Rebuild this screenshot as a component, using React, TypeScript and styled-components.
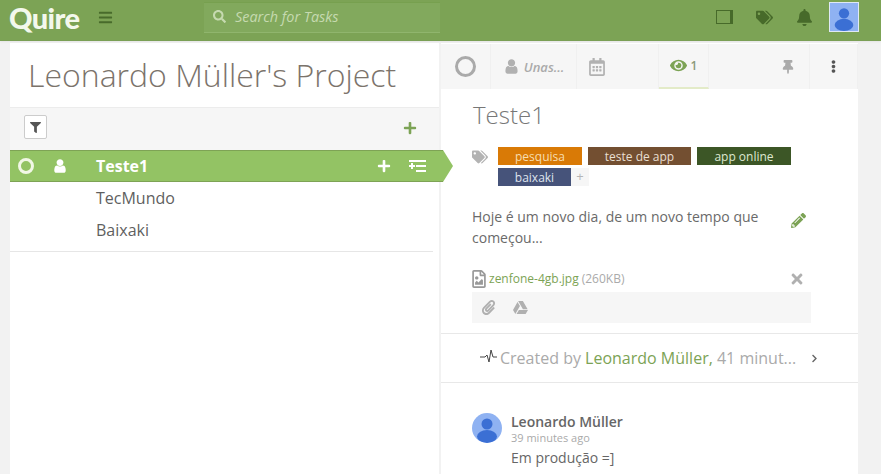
import styled, { createGlobalStyle } from "styled-components";
import {
  FaBars,
  FaBell,
  FaChevronRight,
  FaEllipsisV,
  FaEye,
  FaFilter,
  FaGoogleDrive,
  FaPaperclip,
  FaPencilAlt,
  FaPlus,
  FaRegCalendarAlt,
  FaRegFileImage,
  FaSearch,
  FaTags,
  FaThumbtack,
  FaTimes,
} from "react-icons/fa";

const GlobalStyle = createGlobalStyle`
  html, body {
    margin: 0;
    height: 100%;
    overflow: hidden;
    background: #f2f2f2;
    font-family: "Open Sans", "Liberation Sans", sans-serif;
    color: #555;
  }
  * { box-sizing: border-box; }
`;

const Page = styled.div`
  width: 881px;
  height: 474px;
  overflow: hidden;
`;

const TopBar = styled.header`
  height: 41px;
  background: #7ca355;
  display: flex;
  align-items: flex-start;
  border-bottom: 1px solid #7a9f55;
  box-shadow: 0 1px 2px rgba(0, 0, 0, 0.06);
`;

const Logo = styled.div`
  width: 98px;
  padding-left: 9px;
  font-family: Lato, "Open Sans", sans-serif;
  font-weight: 900;
  font-size: 29px;
  line-height: 35px;
  letter-spacing: -0.6px;
  color: #f3f8ec;
`;

const MenuButton = styled.div`
  width: 106px;
  height: 35px;
  display: flex;
  align-items: center;
  color: #486b2b;
  font-size: 15px;
`;

const SearchBox = styled.div`
  width: 236px;
  height: 31px;
  margin-top: 2px;
  padding: 0 0 3px 9px;
  display: flex;
  align-items: center;
  gap: 9px;
  background: #82a95d;
  border-top: 1px solid #77a04f;
  border-bottom: 1px solid #90b56d;
  color: #c6dab0;
  font-size: 14.4px;
  font-style: italic;
`;

const SearchGlyph = styled(FaSearch)`
  font-size: 13px;
`;

const TopIcons = styled.div`
  flex: 1;
  height: 40px;
  display: flex;
  align-items: flex-start;
  justify-content: flex-end;
  padding: 2px 22px 0 0;
  color: #476a2a;
`;

const TopIcon = styled.div`
  width: 40px;
  height: 30px;
  display: flex;
  align-items: center;
  justify-content: center;
  font-size: 17px;
`;

const PanelGlyph = styled.div`
  width: 17px;
  height: 14px;
  border: 1px solid #476a2a;
  border-right-width: 3px;
`;

const Avatar = styled.div<{ $size: number; $round?: boolean }>`
  width: ${(p) => p.$size}px;
  height: ${(p) => p.$size}px;
  flex: none;
  overflow: hidden;
  background: #8fb2f2;
  border-radius: ${(p) => (p.$round ? "50%" : "0")};
  border: ${(p) => (p.$round ? "none" : "1px solid #dfe9f5")};
  margin-left: ${(p) => (p.$round ? "0" : "5px")};
`;

const Main = styled.div`
  display: flex;
  gap: 2px;
  padding: 2px 0 0 10px;
`;

const ListPanel = styled.section`
  position: relative;
  z-index: 1;
  width: 429px;
  height: 431px;
  background: #fff;
`;

const ProjectTitle = styled.h1`
  margin: 0;
  height: 64px;
  padding-left: 18px;
  font-size: 32px;
  font-weight: 300;
  line-height: 63px;
  color: #7b736b;
  white-space: nowrap;
`;

const ListTools = styled.div`
  height: 43px;
  padding: 7px 22px 0 14px;
  display: flex;
  align-items: flex-start;
  justify-content: space-between;
  background: #f6f6f6;
  border-top: 1px solid #ececec;
`;

const FilterButton = styled.div`
  width: 23px;
  height: 24px;
  display: flex;
  align-items: center;
  justify-content: center;
  background: #fff;
  border: 1px solid #ccc;
  border-radius: 2px;
  color: #555;
  font-size: 11px;
`;

const AddButton = styled.div`
  padding-top: 5px;
  color: #7ca355;
  font-size: 14px;
`;

const TaskRow = styled.div<{ $active?: boolean }>`
  position: relative;
  height: 32px;
  display: flex;
  align-items: center;
  width: ${(p) => (p.$active ? "433px" : "auto")};
  background: ${(p) => (p.$active ? "#93c364" : "transparent")};
  color: ${(p) => (p.$active ? "#fff" : "#5f5f5f")};
  border: ${(p) => (p.$active ? "1px solid #7ea355" : "none")};
  border-width: ${(p) => (p.$active ? "1px 0" : "0")};
  font-size: 16px;
  font-weight: ${(p) => (p.$active ? 700 : 400)};
  ${(p) => (p.$active ? "" : "padding-left: 86px;")}

  ${(p) =>
    p.$active
      ? `&::after {
    content: "";
    position: absolute;
    left: 100%;
    top: -1px;
    border-style: solid;
    border-width: 16px 0 16px 10px;
    border-color: transparent transparent transparent #93c364;
  }`
      : ""}
`;

const StatusRing = styled.div`
  width: 16px;
  height: 16px;
  margin-left: 8px;
  border: 3px solid #f1f7e6;
  border-radius: 50%;
`;

const RowUser = styled.div`
  width: 62px;
  padding-left: 18px;
  display: flex;
  font-size: 16px;
`;

const RowName = styled.div`
  flex: 1;
`;

const RowActions = styled.div`
  display: flex;
  align-items: center;
  gap: 18px;
  padding-right: 17px;
  font-size: 14px;
`;

const IndentGlyph = styled.svg`
  width: 17px;
  height: 12px;
  fill: #fff;
`;

const ListEnd = styled.div`
  width: 423px;
  height: 6px;
  border-bottom: 1px solid #e6e6e6;
`;

const DetailPanel = styled.section`
  width: 417px;
  height: 431px;
  background: #fff;
  overflow: hidden;
`;

const DetailTabs = styled.div`
  height: 45px;
  margin-top: 1px;
  display: flex;
  background: #f6f6f6;
`;

const DetailTab = styled.div<{ $width: number; $active?: boolean }>`
  width: ${(p) => p.$width}px;
  display: flex;
  align-items: center;
  justify-content: center;
  gap: 4px;
  border-right: 1px solid #f0f0f0;
  color: #b1b1b1;
  font-size: 17px;
  border-bottom: ${(p) => (p.$active ? "2px solid #e3ebc8" : "none")};
`;

const CalendarTab = styled(DetailTab)`
  justify-content: flex-start;
  padding-left: 11px;
  font-size: 18px;
`;

const TabSpacer = styled.div`
  flex: 1;
  border-right: 1px solid #f0f0f0;
  display: flex;
  align-items: center;
  justify-content: flex-end;
  padding-right: 14px;
  color: #aaa;
  font-size: 14px;
`;

const Ring = styled.div`
  width: 21px;
  height: 21px;
  border: 3px solid #aaa;
  border-radius: 50%;
`;

const Unassigned = styled.span`
  font-size: 13px;
  font-style: italic;
  font-weight: 600;
  color: #aaa;
`;

const WatchCount = styled.span`
  font-size: 12px;
  font-weight: 600;
  color: #8b9a7a;
`;

const TaskBody = styled.div`
  padding: 0 47px 0 31px;
`;

const TaskTitle = styled.h2`
  margin: 0;
  height: 55px;
  padding-left: 1px;
  font-size: 24px;
  font-weight: 300;
  line-height: 52px;
  color: #777;
`;

const TagArea = styled.div`
  display: flex;
  align-items: flex-start;
  height: 63px;
`;

const TagIcon = styled.div`
  width: 26px;
  flex: none;
  padding-top: 4px;
  color: #b3b3b3;
  font-size: 16px;
`;

const Tags = styled.div`
  width: 313px;
  flex: none;
  display: flex;
  flex-wrap: wrap;
  align-content: flex-start;
  gap: 3px 6px;
  padding-top: 3px;
`;

const Tag = styled.div<{ $bg: string; $ink: string; $width: number }>`
  width: ${(p) => p.$width}px;
  height: 18px;
  background: ${(p) => p.$bg};
  color: ${(p) => p.$ink};
  font-size: 12px;
  line-height: 19px;
  text-align: center;
`;

const TagAdd = styled.div`
  width: 18px;
  height: 18px;
  margin-left: -6px;
  background: #f6f6f6;
  color: #b5b5b5;
  font-size: 13px;
  line-height: 17px;
  text-align: center;
`;

const DescriptionRow = styled.div`
  display: flex;
  justify-content: space-between;
  height: 58px;
  padding-right: 5px;
`;

const Description = styled.p`
  width: 300px;
  margin: 0;
  font-size: 14px;
  line-height: 20.5px;
  color: #6a6a6a;
`;

const EditIcon = styled.div`
  padding-top: 5px;
  color: #7ca355;
  font-size: 15px;
`;

const FileRow = styled.div`
  display: flex;
  align-items: center;
  height: 27px;
  padding-right: 6px;
  font-size: 12px;
  color: #aaa;
`;

const FileGlyph = styled.div`
  display: flex;
  margin: 0 1px 0 -2px;
  color: #999;
  font-size: 18px;
`;

const FileLink = styled.span`
  color: #7ca355;
  margin-right: 3px;
`;

const RemoveFile = styled.div`
  display: flex;
  margin-left: auto;
  color: #b0b0b0;
  font-size: 16px;
`;

const UploadBar = styled.div`
  height: 31px;
  display: flex;
  align-items: center;
  gap: 17px;
  padding-left: 9px;
  background: #f6f6f6;
  color: #b0b0b0;
  font-size: 15px;
`;

const ActivityRow = styled.div`
  height: 50px;
  margin-top: 10px;
  padding-left: 39px;
  display: flex;
  align-items: center;
  border-top: 1px solid #e8e8e8;
  border-bottom: 1px solid #e8e8e8;
  font-size: 16px;
  color: #aaa;
  white-space: nowrap;
`;

const Pulse = styled.svg`
  width: 18px;
  height: 14px;
  margin: -4px 2px 0 0;
  fill: none;
  stroke: #444;
  stroke-width: 1;
`;

const ActivityLink = styled.span`
  color: #7ca355;
`;

const ActivityArrow = styled.div`
  display: flex;
  margin-left: 14px;
  color: #666;
  font-size: 9px;
`;

const Comment = styled.div`
  display: flex;
  gap: 9px;
  padding: 30px 0 0 31px;
`;

const CommentAuthor = styled.div`
  font-size: 14px;
  font-weight: 600;
  line-height: 18px;
  color: #666;
`;

const CommentTime = styled.div`
  font-size: 11px;
  line-height: 13px;
  color: #aaa;
`;

const CommentText = styled.div`
  margin-top: 4px;
  font-size: 14px;
  color: #666;
`;

// the older, rounder person shape; the icon package only has the newer one
function UserGlyph() {
  return (
    <svg viewBox="0 0 1792 1792" width="1em" height="1em" fill="currentColor">
      <path d="M1536 1399q0 109-62.5 187t-150.5 78h-854q-88 0-150.5-78t-62.5-187q0-85 8.5-160.5t31.5-152 58.5-131 94-89 134.5-34.5q131 128 313 128t313-128q76 0 134.5 34.5t94 89 58.5 131 31.5 152 8.5 160.5zm-256-887q0 159-112.5 271.5t-271.5 112.5-271.5-112.5-112.5-271.5 112.5-271.5 271.5-112.5 271.5 112.5 112.5 271.5z" />
    </svg>
  );
}

function UserPicture({ size, round }: { size: number; round?: boolean }) {
  return (
    <Avatar $size={size} $round={round}>
      <svg viewBox="0 0 30 30" width="100%" height="100%">
        <circle cx="15" cy="11" r="5.5" fill="#3b6fd4" />
        <ellipse cx="15" cy="23.5" rx="10" ry="6.5" fill="#3b6fd4" />
      </svg>
    </Avatar>
  );
}

export default function App() {
  return (
    <Page>
      <GlobalStyle />
      <TopBar>
        <Logo>Quire</Logo>
        <MenuButton>
          <FaBars />
        </MenuButton>
        <SearchBox>
          <SearchGlyph />
          <span>Search for Tasks</span>
        </SearchBox>
        <TopIcons>
          <TopIcon>
            <PanelGlyph />
          </TopIcon>
          <TopIcon>
            <FaTags />
          </TopIcon>
          <TopIcon>
            <FaBell />
          </TopIcon>
          <UserPicture size={30} />
        </TopIcons>
      </TopBar>
      <Main>
        <ListPanel>
          <ProjectTitle>Leonardo Müller's Project</ProjectTitle>
          <ListTools>
            <FilterButton>
              <FaFilter />
            </FilterButton>
            <AddButton>
              <FaPlus />
            </AddButton>
          </ListTools>
          <TaskRow $active>
            <StatusRing />
            <RowUser>
              <UserGlyph />
            </RowUser>
            <RowName>Teste1</RowName>
            <RowActions>
              <FaPlus />
              <IndentGlyph viewBox="0 0 17 12">
                <rect x="0" y="0" width="17" height="2" />
                <rect x="7" y="5" width="10" height="2" />
                <rect x="7" y="10" width="10" height="2" />
                <rect x="0" y="5" width="6" height="2" />
                <rect x="2" y="3" width="2" height="6" />
              </IndentGlyph>
            </RowActions>
          </TaskRow>
          <TaskRow>TecMundo</TaskRow>
          <TaskRow>Baixaki</TaskRow>
          <ListEnd />
        </ListPanel>
        <DetailPanel>
          <DetailTabs>
            <DetailTab $width={50}>
              <Ring />
            </DetailTab>
            <DetailTab $width={86}>
              <UserGlyph />
              <Unassigned>Unas...</Unassigned>
            </DetailTab>
            <CalendarTab $width={82}>
              <FaRegCalendarAlt />
            </CalendarTab>
            <DetailTab $width={50} $active>
              <FaEye color="#7ca355" />
              <WatchCount>1</WatchCount>
            </DetailTab>
            <TabSpacer>
              <FaThumbtack />
            </TabSpacer>
            <DetailTab $width={48}>
              <FaEllipsisV color="#555" size={13} />
            </DetailTab>
          </DetailTabs>
          <TaskBody>
            <TaskTitle>Teste1</TaskTitle>
            <TagArea>
              <TagIcon>
                <FaTags />
              </TagIcon>
              <Tags>
                <Tag $bg="#d97a06" $ink="#f7deb0" $width={84}>pesquisa</Tag>
                <Tag $bg="#734f31" $ink="#e9dfd2" $width={103}>teste de app</Tag>
                <Tag $bg="#3c5626" $ink="#dfe8d2" $width={94}>app online</Tag>
                <Tag $bg="#46537a" $ink="#dfe3ee" $width={73}>baixaki</Tag>
                <TagAdd>+</TagAdd>
              </Tags>
            </TagArea>
            <DescriptionRow>
              <Description>Hoje é um novo dia, de um novo tempo que começou...</Description>
              <EditIcon>
                <FaPencilAlt />
              </EditIcon>
            </DescriptionRow>
            <FileRow>
              <FileGlyph>
                <FaRegFileImage />
              </FileGlyph>
              <FileLink>zenfone-4gb.jpg</FileLink> (260KB)
              <RemoveFile>
                <FaTimes />
              </RemoveFile>
            </FileRow>
            <UploadBar>
              <FaPaperclip />
              <FaGoogleDrive />
            </UploadBar>
          </TaskBody>
          <ActivityRow>
            <Pulse viewBox="0 0 18 14">
              <path d="M0 8h5l2-2 2 7 2-12 2 7h4" />
            </Pulse>
            Created by&nbsp;<ActivityLink>Leonardo Müller,</ActivityLink>&nbsp;41 minut...
            <ActivityArrow>
              <FaChevronRight />
            </ActivityArrow>
          </ActivityRow>
          <Comment>
            <UserPicture size={30} round />
            <div>
              <CommentAuthor>Leonardo Müller</CommentAuthor>
              <CommentTime>39 minutes ago</CommentTime>
              <CommentText>Em produção =]</CommentText>
            </div>
          </Comment>
        </DetailPanel>
      </Main>
    </Page>
  );
}
